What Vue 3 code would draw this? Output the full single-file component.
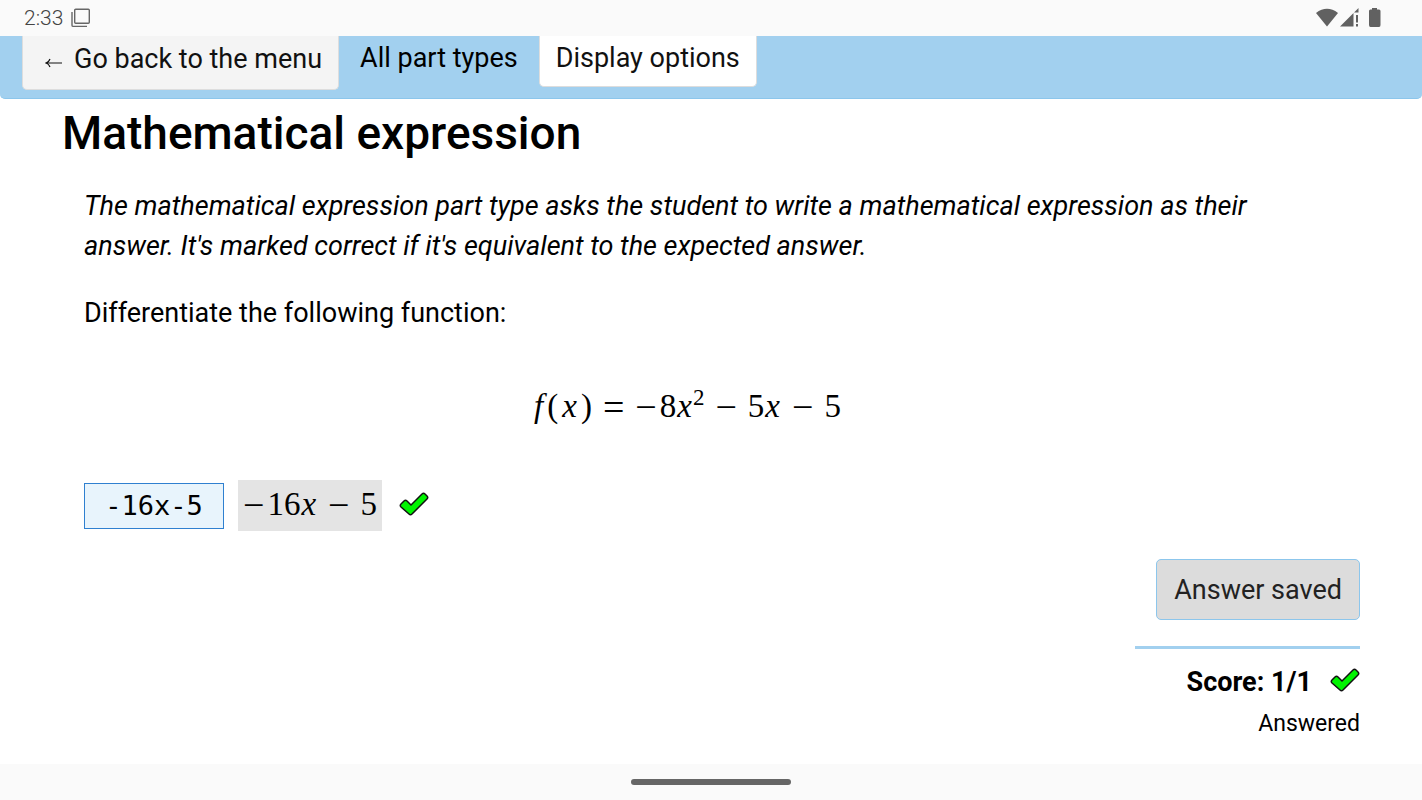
<script setup>
import { ref } from 'vue'

const answer = ref('-16x-5')
const tickPath = 'M2 15 C1 14 1 13 2 12 L5 9 C6 8 7 8 8 9 L12 13 L23 2 C24 1 25 1 26 2 L28 4 C29 5 29 6 28 7 L13 22 C12 23 11 23 10 22 Z'
</script>

<template>
  <div class="screen">
    <div class="status-bar">
      <span class="clock">2:33</span>
      <svg class="windows" width="20" height="20" viewBox="0 0 20 20" fill="none" stroke="#666" stroke-width="1.4">
        <rect x="3.7" y="1.2" width="14.6" height="14" rx="1" />
        <path d="M1 4V17.2Q1 18.4 2.2 18.4H16" />
      </svg>
      <div class="indicators">
        <svg width="66" height="20" viewBox="0 0 66 20" fill="#616161">
          <path d="M0 5Q11 -3.400 22 5L11 18.500Z" />
          <path d="M24 18.500L37.500 5V18.500ZM38 4.500L42.500 0V4.500Z" />
          <path d="M40 7H42V14.500H40ZM40 16H42V18.500H40Z" />
          <path d="M56 0H61V1.500H63Q64.500 1.500 64.500 3V17Q64.500 19 63 19H54.500Q53 19 53 17V3Q53 1.500 54.500 1.500H56Z" />
        </svg>
      </div>
    </div>

    <nav class="top-nav">
      <button class="nav-button back" type="button"><svg class="arrow" width="17" height="10" viewBox="0 0 17 10" fill="none" stroke="#111" stroke-width="1.2"><path d="M17 5H1M5 1Q4 4 1 5Q4 6 5 9" /></svg>Go back to the menu</button>
      <span class="exam-name">All part types</span>
      <button class="nav-button display" type="button">Display options</button>
    </nav>

    <main class="question">
      <h1>Mathematical expression</h1>
      <div class="prompt">
        <p><em>The mathematical expression part type asks the student to write a mathematical expression as their answer. It's marked correct if it's equivalent to the expected answer.</em></p>
        <p>Differentiate the following function:</p>
        <div class="math formula">
          <span class="func"><i>f</i><span>(</span><i>x</i><span>)</span></span>
          <span class="op">=</span>
          <span><span class="sign">−</span>8<i>x</i><sup>2</sup></span>
          <span class="op">−</span>
          <span>5<i>x</i></span>
          <span class="op">−</span>
          <span>5</span>
        </div>
        <div class="answer-row">
          <input v-model="answer" class="answer" type="text" aria-label="Answer" />
          <div class="math preview">
            <span><span class="sign">−</span>16<i>x</i></span>
            <span class="op">−</span>
            <span>5</span>
          </div>
          <svg class="tick" width="30" height="24" viewBox="0 0 30 24"><path :d="tickPath" /></svg>
        </div>
      </div>
      <div class="result">
        <button class="submit" type="button">Answer saved</button>
        <div class="score">
          <div class="score-line">
            <strong>Score: 1/1</strong>
            <svg class="tick" width="30" height="24" viewBox="0 0 30 24"><path :d="tickPath" /></svg>
          </div>
          <div class="answered">Answered</div>
        </div>
      </div>
    </main>

    <div class="gesture-bar"><span class="handle"></span></div>
  </div>
</template>

<style>
body {
  background: #fff;
}
</style>

<style scoped>
* {
  box-sizing: border-box;
}
.screen {
  min-height: 100vh;
  display: flex;
  flex-direction: column;
  font: 27px/40px Roboto, sans-serif;
  color: #000;
}
.status-bar {
  height: 36px;
  padding: 0 40px 0 24px;
  display: flex;
  align-items: center;
  gap: 8px;
  background: #fafafa;
}
.clock {
  font-size: 21px;
  font-weight: 300;
  color: #444;
}
.indicators {
  margin-left: auto;
  display: flex;
}
.top-nav {
  display: flex;
  align-items: flex-start;
  padding: 0 22px 8px;
  background: #a2d0ef;
  border-bottom: 1px solid #8cc6ec;
  border-radius: 0 0 5px 5px;
}
.nav-button {
  font: inherit;
  line-height: 40px;
  color: #111;
  border: 1px solid #ddd;
  border-top: 0;
  border-radius: 0 0 5px 5px;
}
.back {
  display: flex;
  align-items: center;
  gap: 12px;
  padding: 3px 16px 10px 22px;
  background: #f4f4f4;
}
.arrow {
  margin-top: 8px;
}
.exam-name {
  padding: 2px 21px 0;
}
.display {
  padding: 2px 16px 8px;
  background: #fff;
}
.question {
  flex: 1;
  padding: 4px 62px 18px;
}
h1 {
  margin: 0;
  font-size: 46px;
  line-height: 60px;
  font-weight: 500;
}
.prompt {
  padding: 0 70px 0 22px;
}
p {
  margin: 23px 0 27px;
}
.math {
  font-family: "Liberation Serif", serif;
  font-size: 33px;
  white-space: nowrap;
}
.math i {
  padding: 0 1px;
}
.formula {
  margin-top: 53px;
  text-align: center;
}
.func {
  display: inline-flex;
  gap: 3px;
}
sup {
  font-size: 23px;
  line-height: 0;
}
.op,
.sign {
  font-size: 38px;
  line-height: 0;
  vertical-align: -3px;
}
.op {
  margin: 0 11px;
}
.sign {
  margin-right: 3px;
}
.answer-row {
  display: flex;
  align-items: center;
  margin-top: 54px;
}
.answer {
  width: 140px;
  height: 46px;
  padding: 0 20px;
  font: 27px "DejaVu Sans Mono", monospace;
  text-align: center;
  color: #000;
  background: #e8f4fc;
  border: 1px solid #2f80d0;
  border-radius: 0;
}
.preview {
  margin-left: 14px;
  padding: 4px 5px 7px;
  background: #e4e4e4;
}
.tick {
  margin-bottom: 4px;
  fill: #00f400;
  stroke: #111;
  stroke-width: 1.5;
}
.answer-row .tick {
  margin-left: 17px;
}
.result {
  display: flex;
  flex-direction: column;
  align-items: flex-end;
  margin-top: 28px;
}
.submit {
  height: 61px;
  padding: 0 17px;
  font: inherit;
  color: #222;
  background: #dcdcdc;
  border: 1px solid #8cc6ec;
  border-radius: 5px;
}
.score {
  width: 225px;
  margin-top: 26px;
  padding-top: 13px;
  border-top: 3px solid #a2d0ef;
  text-align: right;
}
.score-line {
  display: flex;
  justify-content: flex-end;
  align-items: center;
  gap: 18px;
}
strong {
  font-weight: 700;
}
.answered {
  margin-top: 2px;
  font-size: 23px;
  line-height: 40px;
}
.gesture-bar {
  height: 36px;
  display: flex;
  justify-content: center;
  align-items: center;
  background: #fafafa;
}
.handle {
  width: 160px;
  height: 6px;
  border-radius: 3px;
  background: #666;
}
</style>
